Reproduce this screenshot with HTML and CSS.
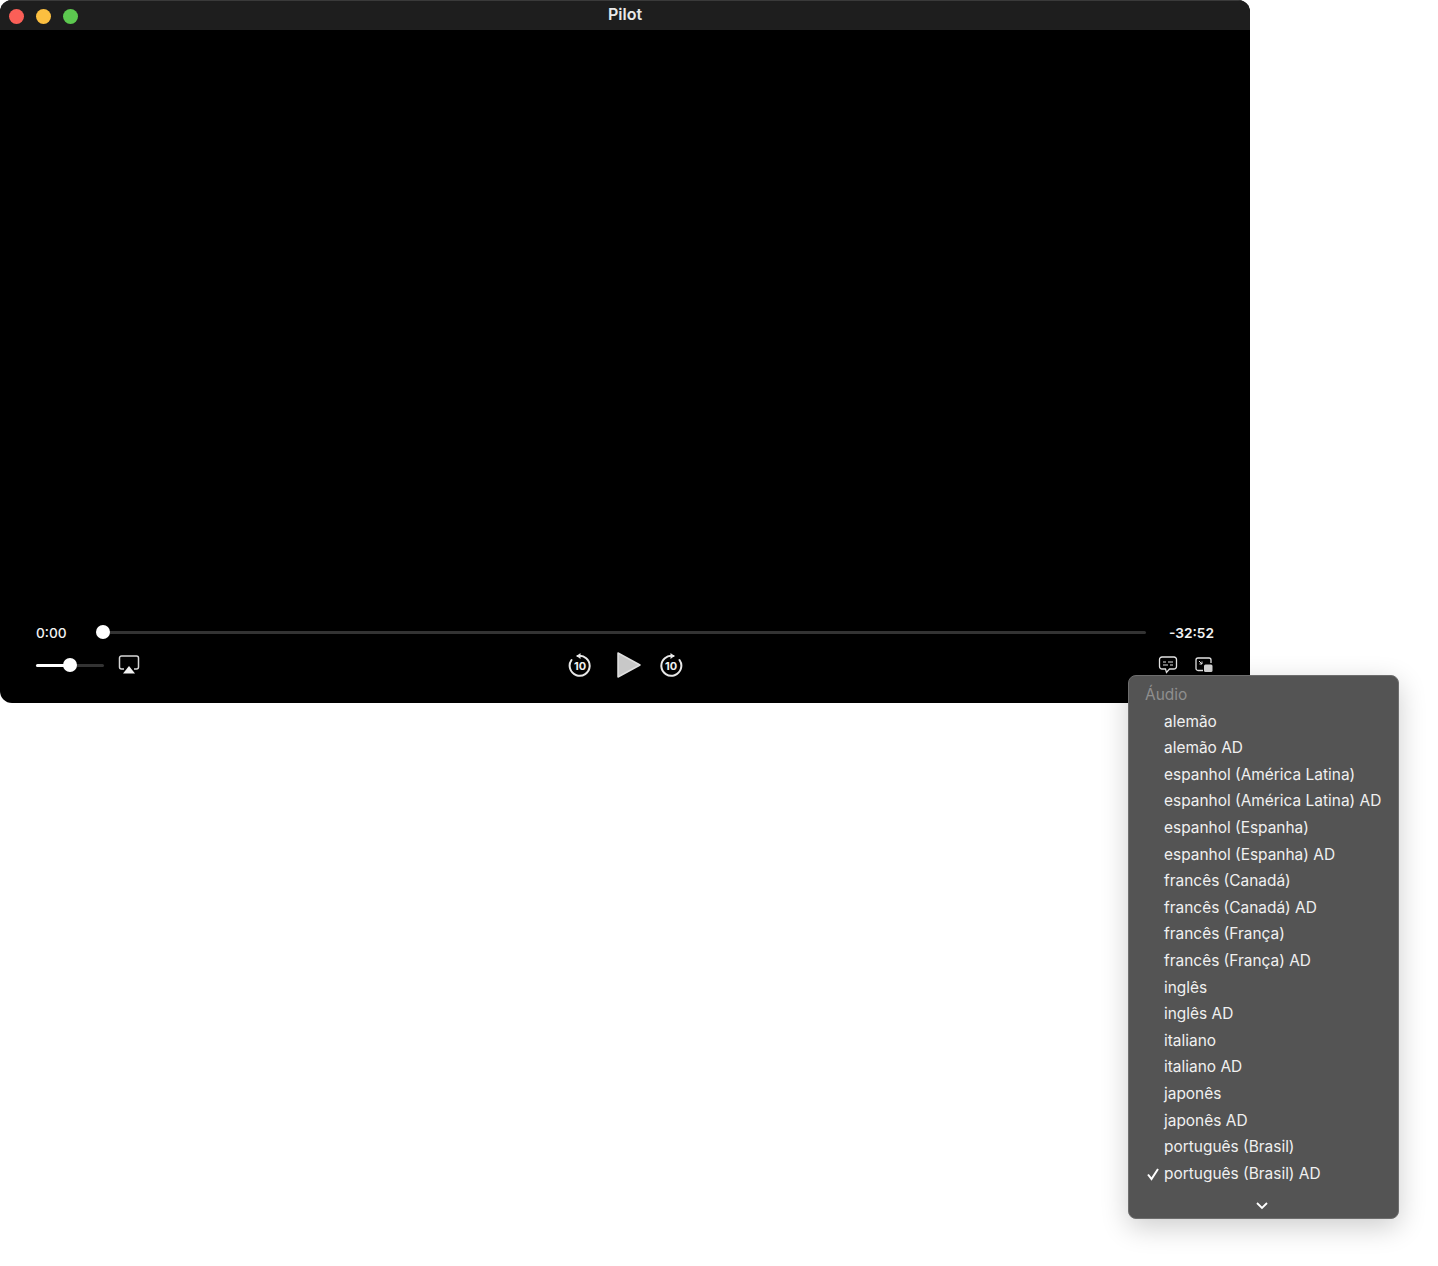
FILE: index.html
```html
<!DOCTYPE html>
<html lang="pt-BR">
<head>
  <meta charset="UTF-8" />
  <meta name="viewport" content="width=device-width, initial-scale=1" />
  <title>Pilot</title>
  <link rel="stylesheet" href="styles.css">
</head>
<body>

  <div class="player">
    <div class="titlebar">
      <div class="lights">
        <span class="light red"></span>
        <span class="light yellow"></span>
        <span class="light green"></span>
      </div>
      <div class="title">Pilot</div>
    </div>

    <div class="video"></div>

    <div class="controls">
      <div class="timeline">
        <span class="time">0:00</span>
        <div class="track"><span class="knob"></span></div>
        <span class="time time-left">-32:52</span>
      </div>

      <div class="buttons">
        <div class="group group-left">
          <div class="volume"><span class="volume-fill"></span><span class="volume-knob"></span></div>
          <svg class="icon-airplay" width="22" height="20" viewBox="0 0 22 20" fill="none">
            <path d="M6 14H3.5A2 2 0 0 1 1.500 12V3A2 2 0 0 1 3.500 1H18.500A2 2 0 0 1 20.500 3V12A2 2 0 0 1 18.500 14H16" stroke="#d6d6d6" stroke-width="1.500"/>
            <path d="M11 11L17 18.500H5Z" fill="#f2f2f2"/>
          </svg>
        </div>

        <div class="group group-center">
          <svg width="24" height="28" viewBox="0 0 24 28" fill="none">
            <path d="M9.500 5A10 10 0 1 1 3.500 9" stroke="#e8e8e8" stroke-width="2" stroke-linecap="round"/>
            <path d="M12.500 2L8.500 5L12.500 8" fill="#e8e8e8"/>
            <text x="12" y="19" class="skip-text">10</text>
          </svg>
          <svg class="icon-play" width="26" height="28" viewBox="0 0 26 28">
            <path d="M2 2L24 14L2 26Z" fill="#c8c8c8" stroke="#e0e0e0" stroke-width="1.500" stroke-linejoin="round"/>
          </svg>
          <svg width="24" height="28" viewBox="0 0 24 28" fill="none">
            <path d="M14.500 5A10 10 0 1 0 20.500 9" stroke="#e8e8e8" stroke-width="2" stroke-linecap="round"/>
            <path d="M11.500 2L15.500 5L11.500 8" fill="#e8e8e8"/>
            <text x="12" y="19" class="skip-text">10</text>
          </svg>
        </div>

        <div class="group group-right">
          <svg width="20" height="18" viewBox="0 0 20 18" fill="none">
            <path d="M4 1H16A2.500 2.500 0 0 1 18.500 3.500V10.500A2.500 2.500 0 0 1 16 13H11.500L8.500 16.500L7.500 13H4A2.500 2.500 0 0 1 1.500 10.500V3.500A2.500 2.500 0 0 1 4 1Z" stroke="#e4e4e4" stroke-width="1.300"/>
            <path d="M5 6H8M10 6H15M5 9H10M12 9H15" stroke="#e4e4e4" stroke-width="1.200"/>
          </svg>
          <svg width="18" height="16" viewBox="0 0 18 16" fill="none">
            <path d="M8 13.500H3A2 2 0 0 1 1 11.500V3A2 2 0 0 1 3 1H14A2 2 0 0 1 16 3V6" stroke="#e4e4e4" stroke-width="1.300"/>
            <path d="M4 4L7 7M7 4.500V7H4.500" stroke="#e4e4e4" stroke-width="1"/>
            <rect x="9" y="7.500" width="8.500" height="7.500" rx="1.500" fill="#d4d4d4"/>
          </svg>
        </div>
      </div>
    </div>
  </div>

  <!-- Audio menu, opened from the subtitles button -->
  <div class="menu">
    <div class="menu-header">Áudio</div>
    <div class="menu-item">alemão</div>
    <div class="menu-item">alemão AD</div>
    <div class="menu-item">espanhol (América Latina)</div>
    <div class="menu-item">espanhol (América Latina) AD</div>
    <div class="menu-item">espanhol (Espanha)</div>
    <div class="menu-item">espanhol (Espanha) AD</div>
    <div class="menu-item">francês (Canadá)</div>
    <div class="menu-item">francês (Canadá) AD</div>
    <div class="menu-item">francês (França)</div>
    <div class="menu-item">francês (França) AD</div>
    <div class="menu-item">inglês</div>
    <div class="menu-item">inglês AD</div>
    <div class="menu-item">italiano</div>
    <div class="menu-item">italiano AD</div>
    <div class="menu-item">japonês</div>
    <div class="menu-item">japonês AD</div>
    <div class="menu-item">português (Brasil)</div>
    <div class="menu-item checked">
      <svg class="check" width="14" height="14" viewBox="0 0 14 14" fill="none">
        <path d="M2 7.500L5.500 12L12 2" stroke="#fff" stroke-width="2"/>
      </svg>
      português (Brasil) AD
    </div>
    <div class="menu-more">
      <svg width="14" height="9" viewBox="0 0 14 9" fill="none">
        <path d="M2 2L7 7L12 2" stroke="#fff" stroke-width="1.800"/>
      </svg>
    </div>
  </div>

</body>
</html>
```

FILE: styles.css
```css
body {
  background-color: #fff;
  margin: 0;
  font-family: 'Inter', 'Liberation Sans', sans-serif;
  color: #fff;
}

.player {
  width: 1250px;
  height: 703px;
  background-color: #000;
  border-radius: 12px;
  display: flex;
  flex-direction: column;
  overflow: hidden;
}

.titlebar {
  height: 30px;
  flex: none;
  background-color: #1e1e1e;
  border-top: 1px solid #3a3a3a;
  box-sizing: border-box;
  display: flex;
  align-items: center;
  position: relative;
}

.lights {
  display: flex;
  gap: 12px;
  margin-left: 9px;
  margin-top: 2px;
}

.light {
  width: 15px;
  height: 15px;
  border-radius: 50%;
}

.red { background-color: #fb5f57; }
.yellow { background-color: #fcbf40; }
.green { background-color: #5cc84f; }

.title {
  position: absolute;
  left: 0;
  right: 0;
  top: 3px;
  text-align: center;
  font-size: 16px;
  font-weight: 600;
  color: #e8e8e8;
}

.video {
  flex: 1;
}

.controls {
  padding: 0 36px 24px;
}

.timeline {
  display: flex;
  align-items: center;
  height: 20px;
  margin-bottom: 9px;
}

.time {
  font-size: 13.7px;
  font-weight: 500;
  color: #f2f2f2;
  width: 60px;
  padding-top: 1px;
}

.time-left {
  font-weight: 600;
  text-align: right;
  width: 68px;
}

.track {
  flex: 1;
  height: 3px;
  background-color: #333;
  border-radius: 2px;
  position: relative;
}

.knob {
  position: absolute;
  left: 0;
  top: -5.5px;
  width: 14px;
  height: 14px;
  border-radius: 50%;
  background-color: #fff;
}

.buttons {
  display: grid;
  grid-template-columns: 1fr auto 1fr;
  align-items: center;
  height: 28px;
}

.group {
  display: flex;
  align-items: center;
}

.group-left {
  gap: 14px;
}

.group-center {
  gap: 22px;
  padding-left: 1px;
}

.group-right {
  justify-content: flex-end;
  gap: 17px;
  padding-right: 1px;
}

.icon-play {
  margin-left: 2px;
  margin-right: -5px;
}

.volume {
  width: 68px;
  height: 3px;
  background-color: #333;
  border-radius: 2px;
  position: relative;
}

.volume-fill {
  position: absolute;
  left: 0;
  top: 0;
  height: 3px;
  width: 34px;
  background-color: #fff;
  border-radius: 2px;
}

.volume-knob {
  position: absolute;
  left: 26.5px;
  top: -5.5px;
  width: 14px;
  height: 14px;
  border-radius: 50%;
  background-color: #fff;
}

.skip-text {
  font-size: 11px;
  font-weight: 700;
  fill: #f0f0f0;
  text-anchor: middle;
}

.menu {
  position: absolute;
  left: 1128px;
  top: 675px;
  width: 271px;
  height: 544px;
  box-sizing: border-box;
  padding-top: 6px;
  background-color: #545454;
  border-radius: 8px;
  border: 1px solid #6e6e6e;
  box-shadow: 0 8px 28px rgba(0,0,0,0.2);
  font-size: 15.45px;
}

.menu-header {
  height: 26.6px;
  line-height: 26.6px;
  padding-left: 16px;
  color: #8f8f8f;
}

.menu-item {
  height: 26.6px;
  line-height: 26.6px;
  padding-left: 35px;
  color: #f0f0f0;
  white-space: nowrap;
  position: relative;
}

.check {
  position: absolute;
  left: 17px;
  top: 6px;
}

.menu-more {
  display: flex;
  justify-content: center;
  margin-top: 14px;
  padding-right: 4px;
}
```
